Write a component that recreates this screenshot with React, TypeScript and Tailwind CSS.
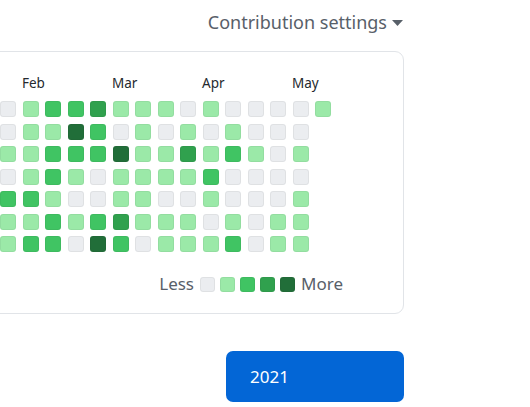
import { ChevronDown } from 'lucide-react';

// levels per row, columns left to right (last week only has its first day)
const ROWS: number[][] = [
  [0, 1, 2, 2, 3, 1, 1, 1, 0, 1, 0, 0, 0, 0, 1],
  [0, 1, 1, 4, 2, 0, 1, 0, 1, 0, 1, 0, 0, 0],
  [1, 1, 2, 2, 2, 4, 1, 1, 3, 1, 2, 1, 0, 1],
  [0, 1, 2, 1, 0, 1, 1, 1, 1, 2, 0, 0, 0, 0],
  [2, 2, 1, 0, 0, 1, 1, 0, 0, 1, 0, 0, 0, 1],
  [1, 1, 2, 1, 2, 3, 1, 1, 1, 0, 1, 0, 1, 1],
  [1, 2, 2, 0, 4, 2, 0, 1, 1, 1, 2, 0, 1, 1],
];

const LEVEL_BG = ['bg-[#ebedf0]', 'bg-[#9be9a8]', 'bg-[#40c463]', 'bg-[#30a14e]', 'bg-[#216e39]'];

const MONTHS = ['Feb', 'Mar', 'Apr', 'May'];

const WEEKS = Array.from({ length: 15 }, (_, c) =>
  ROWS.map((row) => row[c]).filter((v) => v !== undefined)
);

function Cell({ level, size = 'w-[16px] h-[16px]' }: { level: number; size?: string }) {
  return (
    <div
      className={`${size} rounded-[3px] ${LEVEL_BG[level]} outline outline-1 -outline-offset-1 outline-[#1b1f230f]`}
    />
  );
}

export default function App() {
  return (
    <div
      className="w-[530px] h-[407px] overflow-hidden bg-white"
      style={{ fontFamily: '"Segoe UI", "Noto Sans", "Open Sans", sans-serif' }}
    >
      <div className="ml-[-17px] w-[421px] flex flex-col">
        {/* Header */}
        <div className="flex justify-end items-center h-[27px] mt-[9px] text-[#586069]">
          <span className="text-[18px] leading-[27px]">Contribution settings</span>
          <svg width="11" height="6" viewBox="0 0 11 6" className="ml-[5px] mr-[1px] mt-[1px]">
            <path d="M0 0 H11 L5.5 6 Z" fill="#586069" />
          </svg>
        </div>

        {/* Calendar card */}
        <div className="mt-[15px] border border-[#e1e4e8] rounded-[9px] pl-[16px] pt-[22px] pb-[19px]">
          <div className="flex pl-[22px] h-[19px] text-[13.5px] leading-[19px] text-[#24292e]">
            {MONTHS.map((m) => (
              <span key={m} className="w-[90px]">
                {m}
              </span>
            ))}
          </div>
          <div className="flex gap-[6.5px] mt-[8px]">
            {WEEKS.map((week, c) => (
              <div key={c} className="flex flex-col gap-[6.5px]">
                {week.map((lvl, r) => (
                  <Cell key={r} level={lvl} />
                ))}
              </div>
            ))}
          </div>
          <div className="flex justify-end items-center h-[20px] mt-[22px] pr-[60px] text-[17px] text-[#586069]">
            <span className="mr-[6px]">Less</span>
            <div className="flex gap-[5px]">
              {[0, 1, 2, 3, 4].map((l) => (
                <Cell key={l} level={l} size="w-[15px] h-[15px]" />
              ))}
            </div>
            <span className="ml-[6px]">More</span>
          </div>
        </div>

        {/* Year button */}
        <div className="flex justify-end mt-[37px]">
          <button className="w-[178px] h-[51px] rounded-[7px] bg-[#0366d6] text-white text-left pl-[24px] text-[17px]">
            2021
          </button>
        </div>
      </div>
    </div>
  );
}
